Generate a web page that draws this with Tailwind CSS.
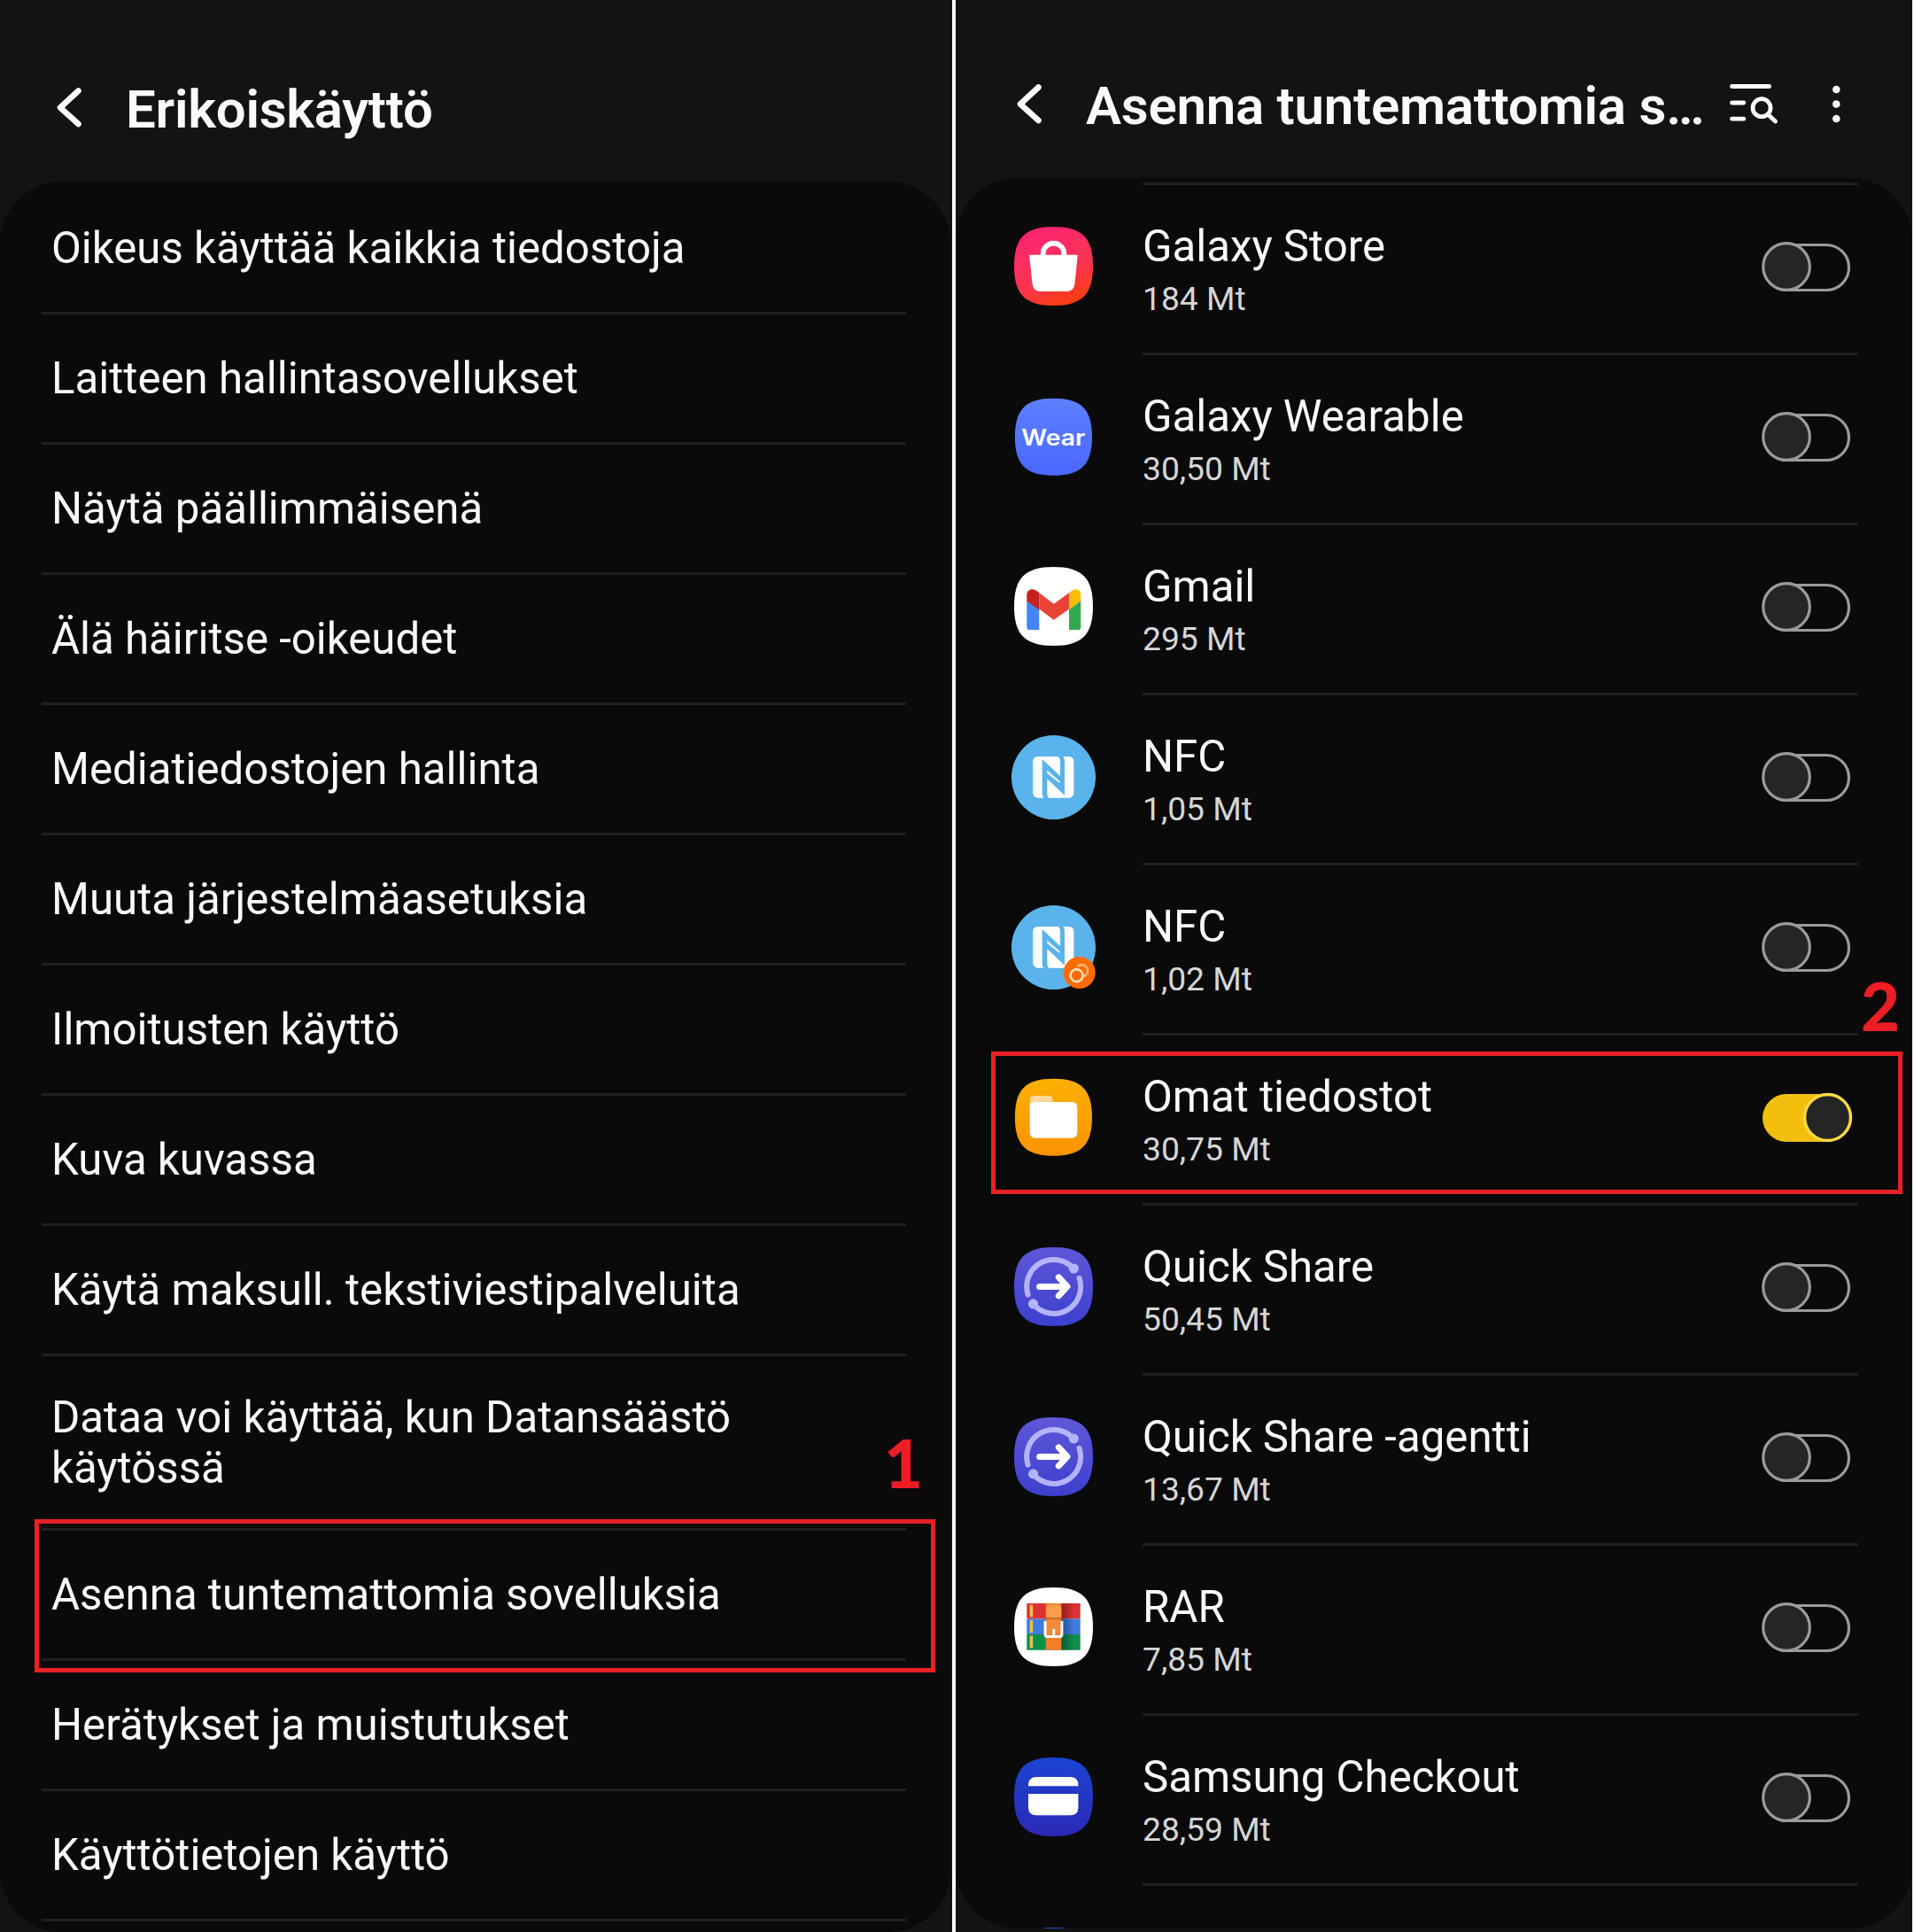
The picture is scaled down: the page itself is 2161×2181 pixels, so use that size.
<!DOCTYPE html>
<html lang="fi">
<head>
<meta charset="utf-8">
<title>Asenna tuntemattomia sovelluksia</title>
<script src="https://cdn.jsdelivr.net/npm/@tailwindcss/browser@4"></script>
</head>
<body class="bg-white">
<svg class="absolute h-0 w-0" aria-hidden="true">
  <defs>
    <linearGradient id="g-store" x1="0.35" y1="0" x2="0.75" y2="1"><stop offset="0" stop-color="#ff2471"/><stop offset="0.55" stop-color="#fb3355"/><stop offset="1" stop-color="#fb3d0c"/></linearGradient>
    <linearGradient id="g-wear" x1="0" y1="0" x2="0" y2="1"><stop offset="0" stop-color="#5c80ff"/><stop offset="1" stop-color="#4a67ff"/></linearGradient>
    <linearGradient id="g-files" x1="0" y1="0" x2="0" y2="1"><stop offset="0" stop-color="#fbb003"/><stop offset="1" stop-color="#f99300"/></linearGradient>
    <linearGradient id="g-share" x1="0" y1="0" x2="0" y2="1"><stop offset="0" stop-color="#5f57d9"/><stop offset="1" stop-color="#3c40cd"/></linearGradient>
    <linearGradient id="g-pay" x1="0" y1="0" x2="0" y2="1"><stop offset="0" stop-color="#1c44d2"/><stop offset="1" stop-color="#2b29b6"/></linearGradient>
    <linearGradient id="g-shade" x1="0" y1="0" x2="1" y2="0"><stop offset="0" stop-color="#000" stop-opacity="0.35"/><stop offset="1" stop-color="#000" stop-opacity="0"/></linearGradient>
    <path id="squircle" d="M48.5 4C80.5 4 93 16.5 93 48.5S80.5 93 48.5 93 4 80.5 4 48.5 16.5 4 48.5 4Z"/>
    <g id="nfc">
      <circle cx="48.5" cy="49.5" r="47.5" fill="#5ab3ea"/>
      <rect x="25.2" y="26" width="46.2" height="46.7" rx="5.5" fill="#fff"/>
      <g transform="translate(-21 -28) scale(0.33333)">
        <path fill="#5ab3ea" d="M170 171L231 228V178C231 170 228 164 222 161H241C245 165 246 172 246 180V293L187 238V285C187 294 189 300 193 303H176C172 299 170 293 170 285Z"/>
        <path fill="#fff" d="M187 209L229 245V252L187 219Z"/>
      </g>
    </g>
    <g id="share">
      <use href="#squircle" fill="url(#g-share)"/>
      <g fill="none" stroke="#b4b3fb" stroke-width="6" stroke-linecap="round">
        <path d="M19.6 57.5A30.3 30.3 0 0 1 70.5 27.5"/>
        <path d="M77.5 38.8A30.3 30.3 0 0 1 26 68.5"/>
      </g>
      <circle cx="71.3" cy="28" r="5.6" fill="#b4b3fb"/><circle cx="25.5" cy="67.9" r="5.6" fill="#b4b3fb"/>
      <path d="M32.6 48.4H63.6M54.3 37.9L64 48.4L54.3 58.9" fill="none" stroke="#fff" stroke-width="7" stroke-linecap="round" stroke-linejoin="round"/>
    </g>
  </defs>
</svg>

<div class="flex h-[2181px] w-[2161px] overflow-hidden font-['Roboto',sans-serif] text-[#fafafa]">
  <!-- Special access -->
  <section class="relative flex w-[1075px] flex-col bg-[#131313]">
    <header class="flex h-[205px] items-start pl-[61px]">
      <svg class="mt-[97px] h-12 w-9" viewBox="0 0 36 48" fill="none" stroke="#fff" stroke-width="6.500" stroke-linecap="round" stroke-linejoin="round"><path d="M27.500 5.500L7 24.500L27.500 43"/></svg>
      <h1 class="mt-[89px] ml-[45px] text-[60px] leading-[70px] font-semibold tracking-[-0.25px]">Erikoiskäyttö</h1>
    </header>
    <ul id="access" class="mr-0.5 flex-1 rounded-[70px] bg-[#0a0a0a] pt-[3px] pr-[50px] pl-[47px] text-[49.200px] leading-[57px]"></ul>
    <div class="absolute top-[1715px] left-[39px] h-[173px] w-[1017px] border-[5px] border-[#ea2027]"></div>
    <span class="absolute top-[1605px] left-[998px] font-['Lato'] text-[76px] leading-[92px] font-black text-[#ee1c25]">1</span>
  </section>

  <div class="w-1 bg-white"></div>

  <!-- Install unknown apps -->
  <section class="relative flex w-[1080px] flex-col bg-[#131313]">
    <header class="flex h-[201px] shrink-0 items-start pl-[66px]">
      <svg class="mt-[93px] h-12 w-9 shrink-0" viewBox="0 0 36 48" fill="none" stroke="#fff" stroke-width="6.500" stroke-linecap="round" stroke-linejoin="round"><path d="M27.500 5.500L7 24.500L27.500 43"/></svg>
      <h1 class="mt-[85px] ml-[45px] w-[724px] text-[60px] leading-[70px] font-semibold tracking-[-0.25px] whitespace-nowrap">Asenna tuntemattomia s…</h1>
      <svg class="mt-[91px] h-[50px] w-[60px] shrink-0" viewBox="1950 91 60 50" fill="none" stroke="#fff" stroke-width="4.800" stroke-linecap="round"><path d="M1955.500 97.500H1997.500M1955.500 116H1968.800M1955.500 134.200H1968.800M1997.500 130.500L2004.500 137"/><circle cx="1989" cy="121.700" r="10"/></svg>
      <svg class="mt-[91px] ml-[53px] h-[50px] w-5 shrink-0" viewBox="0 0 20 50" fill="#fff"><circle cx="10.300" cy="10" r="4.300"/><circle cx="10.300" cy="26.500" r="4.300"/><circle cx="10.300" cy="43" r="4.300"/></svg>
    </header>
    <ul id="apps" class="h-[1976px] overflow-hidden rounded-[70px] bg-[#0a0a0a] pt-[5px] pr-[61px] pl-[62px]"></ul>
    <div class="absolute top-[1187px] left-[40px] h-[161px] w-[1029px] border-[5px] border-[#ea2027]"></div>
    <span class="absolute top-[1089px] left-[1022px] font-['Lato'] text-[76px] leading-[92px] font-black text-[#ee1c25]">2</span>
  </section>
</div>

<script>
const access = [
  'Oikeus käyttää kaikkia tiedostoja', 'Laitteen hallintasovellukset', 'Näytä päällimmäisenä',
  'Älä häiritse -oikeudet', 'Mediatiedostojen hallinta', 'Muuta järjestelmäasetuksia',
  'Ilmoitusten käyttö', 'Kuva kuvassa', 'Käytä maksull. tekstiviestipalveluita',
  'Dataa voi käyttää, kun Datansäästö<br>käytössä', 'Asenna tuntemattomia sovelluksia',
  'Herätykset ja muistutukset', 'Käyttötietojen käyttö'
];
document.getElementById('access').innerHTML = access.map(t =>
  `<li class="flex ${t.includes('<br>') ? 'h-[197px] pt-px' : 'h-[147px]'} items-center border-b-[3px] border-[#202020] pl-[11px] whitespace-nowrap"><span>${t}</span></li>`).join('');

const sq = f => `<use href="#squircle" fill="${f}"/>`;
const icons = {
  store: sq('url(#g-store)') + '<path fill="#fff" d="M22 35.700H75Q75.800 35.700 75.700 36.500L72.500 68Q71.500 77 63 77H34Q25.500 77 24.500 68L21.200 36.500Q21.200 35.700 22 35.700Z"/><path d="M36.700 36.500V34.400A11.800 11.800 0 0 1 60.300 34.400V36.500" fill="none" stroke="#fff" stroke-width="5.800"/>',
  wear: '<g transform="translate(1 1.800) scale(0.978)">' + sq('url(#g-wear)') + '</g><text x="12.300" y="58.600" font-family="Inter" font-weight="600" font-size="25.500" textLength="72" lengthAdjust="spacingAndGlyphs" fill="#fff">Wear</text>',
  gmail: sq('#fff') + '<path fill="#4285f4" d="M18.300 42V72Q18.300 75 21.300 75H32.300V50Z"/><path fill="#34a853" d="M79.300 42V72Q79.300 75 76.300 75H66V50Z"/><path fill="#ea4335" d="M32.300 33.300L48.800 45.700L66 33.300V51.500L48.800 63.700L32.300 51.500Z"/><path fill="#c5221f" d="M18.300 42.500V35.500C18.300 29 25.500 27 30.500 31.800L32.300 33.300V52.500Z"/><path fill="#fbbc04" d="M79.300 42.500V35.500C79.300 29 72.500 27 67.800 31.800L66 33.300V52.500Z"/>',
  nfc: '<use href="#nfc"/>',
  nfc2: '<use href="#nfc"/><circle cx="77.700" cy="78" r="18" fill="#fd6c02"/><path d="M75.500 71A6.800 6.800 0 1 1 82.500 82.300" fill="none" stroke="#ffb375" stroke-width="2.600"/><circle cx="74.600" cy="81.200" r="7" fill="none" stroke="#ffe6c4" stroke-width="2.400"/>',
  files: '<g transform="translate(1 1.800) scale(0.978)">' + sq('url(#g-files)') + '</g><path fill="#fdd99c" d="M21.700 42V29.500Q21.700 25 26.200 25H43.500Q47.500 25 47.500 30V42Z"/><rect x="21.700" y="32" width="53.600" height="40.700" rx="5.500" fill="#fff"/>',
  share: '<use href="#share"/>',
  rar: sq('#fff') + '<path fill="#dd3232" d="M18.300 22H78.700V39.500H18.300Z"/><path fill="#3f7be0" d="M18.300 39.500H78.700V57H18.300Z"/><path fill="#0f8f4c" d="M18.300 57H78.700V74.700H18.300Z"/><path fill="url(#g-shade)" d="M57.300 22H72V74.700H57.300Z"/><path fill="#f2c14a" d="M21.700 23.700H25.200V37.300H21.700ZM21.700 41H25.200V55.300H21.700ZM21.700 58.700H25.200V72.300H21.700Z"/><path fill="#f07f26" d="M39.700 22H57.300V74.700H39.700Z"/><path fill="#fb9c4b" d="M40 28Q41 23 48.500 23T57.300 28V38.500H40Z"/><path fill="#b5541a" d="M39.700 38.400H57.300V39.600H39.700Z"/><path d="M39.200 42V57Q39.200 59.500 41.500 59.500H55.500Q57.800 59.500 57.800 57V42" fill="none" stroke="#fff" stroke-width="3.200"/><path fill="#f58b35" d="M40.700 40H56.300V56H40.700Z"/><path d="M48.700 51V58.500" stroke="#fff" stroke-width="3"/>',
  pay: sq('url(#g-pay)') + '<path fill="#fff" d="M20 36.300V34.500Q20.500 26 29 26H67.500Q76 26 76.400 34.500V36.300ZM20 45H76.400V61Q76 69.300 67.500 69.300H29Q20.500 69.300 20 61Z"/>',
  next: sq('#2f55cf')
};
const apps = [
  ['store', 'Galaxy Store', '184 Mt'], ['wear', 'Galaxy Wearable', '30,50 Mt'], ['gmail', 'Gmail', '295 Mt'],
  ['nfc', 'NFC', '1,05 Mt'], ['nfc2', 'NFC', '1,02 Mt'], ['files', 'Omat tiedostot', '30,75 Mt', true],
  ['share', 'Quick Share', '50,45 Mt'], ['share', 'Quick Share -agentti', '13,67 Mt'], ['rar', 'RAR', '7,85 Mt'],
  ['pay', 'Samsung Checkout', '28,59 Mt'], ['next', '', '']
];
const toggle = on => on
  ? '<rect x="1" y="2" width="100" height="54" rx="27" fill="#f2bf0f"/><circle cx="74.500" cy="28.500" r="26" fill="#252525" stroke="#ffd942" stroke-width="3.500"/>'
  : '<rect x="3" y="3.500" width="95.500" height="51" rx="25.500" fill="none" stroke="#9b9b9b" stroke-width="3.200"/><circle cx="28" cy="28" r="26.300" fill="#252525" stroke="#9b9b9b" stroke-width="3.200"/>';
document.getElementById('apps').innerHTML = apps.map(([icon, name, size, on]) => `
  <li class="flex h-[192px] items-start">
    <svg class="mt-[46px] h-24 w-24 shrink-0 overflow-visible" viewBox="0 0 96 96">${icons[icon]}</svg>
    <div class="ml-[53px] flex h-[192px] flex-1 items-start justify-between border-t-[3px] border-[#202020]">
      <div class="pt-10">
        <div class="text-[49.200px] leading-[58px]">${name}</div>
        <div class="mt-2 text-[37.200px] leading-[44px] text-[#d6d6d6]">${size}</div>
      </div>
      ${name ? `<svg class="mt-16 mr-1.5 h-[58px] w-[103px]" viewBox="0 0 103 58">${toggle(on)}</svg>` : ''}
    </div>
  </li>`).join('');
</script>
</body>
</html>
